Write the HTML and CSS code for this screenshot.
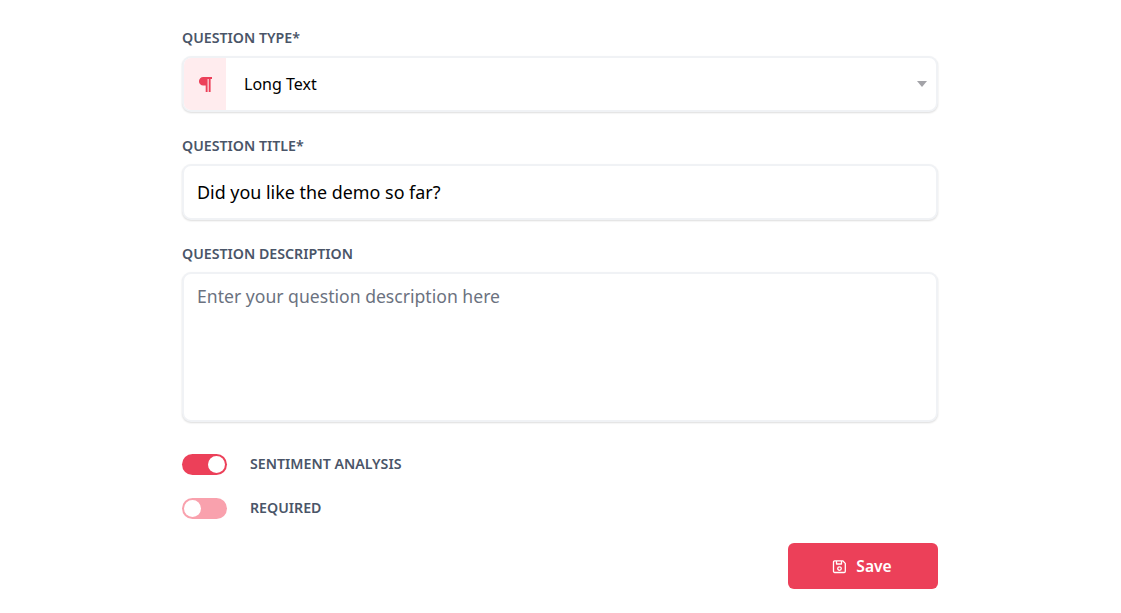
FILE: index.html
```html
<!DOCTYPE html>
<html lang="en">
<head>
<meta charset="utf-8">
<title>Question</title>
<link rel="stylesheet" href="styles.css">
</head>
<body>
<form class="form">
  <div class="field">
    <label class="label">QUESTION TYPE*</label>
    <div class="box select">
      <span class="select-icon">
        <svg width="14" height="16" viewBox="0 0 14 16"><path fill="#ec4059" d="M5.2 1H14v2h-1.4v13h-1.9V3H9.6v13H7.7V9.5H5.2a4.25 4.25 0 0 1 0-8.5z"/></svg>
      </span>
      <span class="select-value">Long Text</span>
      <span class="caret"></span>
    </div>
  </div>
  <div class="field">
    <label class="label">QUESTION TITLE*</label>
    <div class="box input">Did you like the demo so far?</div>
  </div>
  <div class="field">
    <label class="label">QUESTION DESCRIPTION</label>
    <div class="box textarea">Enter your question description here</div>
  </div>
  <div class="toggles">
    <div class="toggle-row">
      <span class="toggle on"><span class="knob"></span></span>
      <span class="toggle-label">SENTIMENT ANALYSIS</span>
    </div>
    <div class="toggle-row">
      <span class="toggle off"><span class="knob"></span></span>
      <span class="toggle-label">REQUIRED</span>
    </div>
  </div>
  <div class="actions">
    <button type="button" class="save">
      <svg width="15" height="15" viewBox="0 0 15 15" fill="none" stroke="#fff" stroke-width="1.3" stroke-linejoin="round"><path d="M1.5 3a1.2 1.2 0 0 1 1.2-1.2h8l2.6 2.6v7.9a1.2 1.2 0 0 1-1.2 1.2H2.7a1.2 1.2 0 0 1-1.2-1.2z"/><path d="M4.5 2v3h5V2"/><circle cx="7.5" cy="9.6" r="1.8"/></svg>
      <span>Save</span>
    </button>
  </div>
</form>
</body>
</html>
```
FILE: styles.css
```css
* { box-sizing: border-box; }
html, body { margin: 0; padding: 0; background: #fff; }
body { font-family: "Noto Sans", "Open Sans", sans-serif; color: #000; }
.form { width: 756px; margin-left: 182px; padding-top: 29px; }
.field { margin-bottom: 25px; }
.label {
  display: block; height: 17px; line-height: 17px; margin-bottom: 10px;
  font-size: 14.2px; font-weight: 600; color: #4a5568;
}
.box {
  background: #fff; border: 2px solid #f0f2f5; border-radius: 9px;
  box-shadow: 0 1px 2px rgba(0,0,0,.14);
}
.select { display: flex; align-items: center; height: 56px; overflow: hidden; }
.select-icon {
  width: 42px; align-self: stretch; background: #ffecee;
  display: flex; align-items: center; justify-content: center;
}
.select-value { margin-left: 18px; flex: 1; font-size: 16px; }
.caret {
  width: 0; height: 0; margin-right: 9px;
  border-left: 5px solid transparent; border-right: 5px solid transparent;
  border-top: 6px solid #a3a3a8;
}
.input { height: 56px; padding: 0 13px; line-height: 52px; font-size: 17.9px; }
.textarea { height: 150px; padding: 9px 13px; line-height: 26px; font-size: 17.6px; color: #6b7280; }
.toggles { display: flex; flex-direction: column; gap: 24px; margin-top: 32px; }
.toggle-row { display: flex; align-items: center; gap: 23px; height: 20px; }
.toggle { width: 45px; height: 21px; border-radius: 11px; padding: 2px; display: flex; }
.toggle.on { background: #ec4059; justify-content: flex-end; }
.toggle.off { background: #f9a1ad; justify-content: flex-start; }
.knob { width: 17px; height: 17px; border-radius: 50%; background: #fff; }
.toggle-label { font-size: 14.2px; line-height: 18px; font-weight: 600; color: #4a5568; }
.actions { display: flex; justify-content: flex-end; margin-top: 25px; }
.save {
  width: 150px; height: 46px; border: 0; border-radius: 6px; background: #ec4059; color: #fff;
  padding: 0 2px 0 0;
  font-family: inherit; font-size: 15.6px; font-weight: 600;
  display: flex; align-items: center; justify-content: center; gap: 9px;
}
```
